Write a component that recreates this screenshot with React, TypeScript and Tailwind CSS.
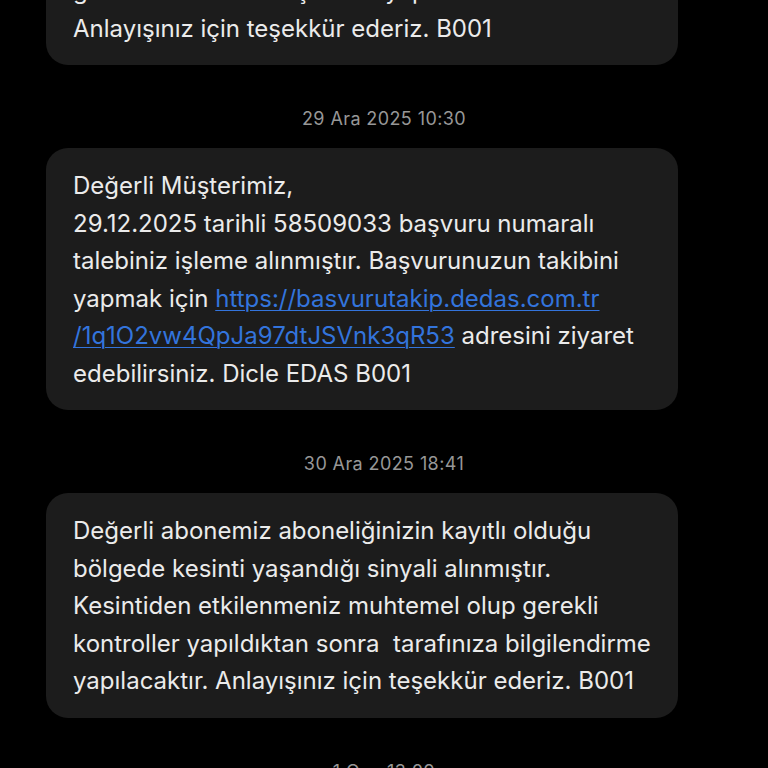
import React from "react";

const Stamp = ({ children }: { children: React.ReactNode }) => (
  <div className="mt-[44px] mb-[19px] text-center text-[18px] leading-[20px] tracking-[0.4px] text-[#979797]">
    {children}
  </div>
);

const Bubble = ({ children, className = "" }: { children: React.ReactNode; className?: string }) => (
  <div
    className={
      "mx-[46px] w-[632px] rounded-[22px] bg-[#1c1c1c] pl-[27px] pr-[12px] pt-[19px] pb-[18px] text-[24px] leading-[37.5px] text-[#ebebeb] " +
      className
    }
  >
    {children}
  </div>
);

export default function App() {
  return (
    <div
      className="h-[768px] w-[768px] overflow-hidden bg-black"
      style={{ fontFamily: "Inter, 'Liberation Sans', sans-serif" }}
    >
      <Bubble className="mt-[-122px]">
        <div>Değerli abonemiz aboneliğinizin kayıtlı olduğu</div>
        <div>bölgede kesinti yaşandığı sinyali alınmıştır.</div>
        <div>gereken kontrol ve işlemler yapılmaktadır.</div>
        <div>Anlayışınız için teşekkür ederiz. B001</div>
      </Bubble>
      <Stamp>29 Ara 2025 10:30</Stamp>
      <Bubble>
        <div>Değerli Müşterimiz,</div>
        <div>29.12.2025 tarihli 58509033 başvuru numaralı</div>
        <div>talebiniz işleme alınmıştır. Başvurunuzun takibini</div>
        <div>
          yapmak için{" "}
          <span className="text-[#3374dc] underline decoration-1 underline-offset-[3px]">
            https://basvurutakip.dedas.com.tr
          </span>
        </div>
        <div>
          <span className="text-[#3374dc] underline decoration-1 underline-offset-[3px]">
            /1q1O2vw4QpJa97dtJSVnk3qR53
          </span>{" "}
          adresini ziyaret
        </div>
        <div>edebilirsiniz. Dicle EDAS B001</div>
      </Bubble>
      <Stamp>30 Ara 2025 18:41</Stamp>
      <Bubble>
        <div>Değerli abonemiz aboneliğinizin kayıtlı olduğu</div>
        <div>bölgede kesinti yaşandığı sinyali alınmıştır.</div>
        <div>Kesintiden etkilenmeniz muhtemel olup gerekli</div>
        <div>kontroller yapıldıktan sonra&nbsp; tarafınıza bilgilendirme</div>
        <div>yapılacaktır. Anlayışınız için teşekkür ederiz. B001</div>
      </Bubble>
      <Stamp>1 Oca 13:09</Stamp>
    </div>
  );
}
